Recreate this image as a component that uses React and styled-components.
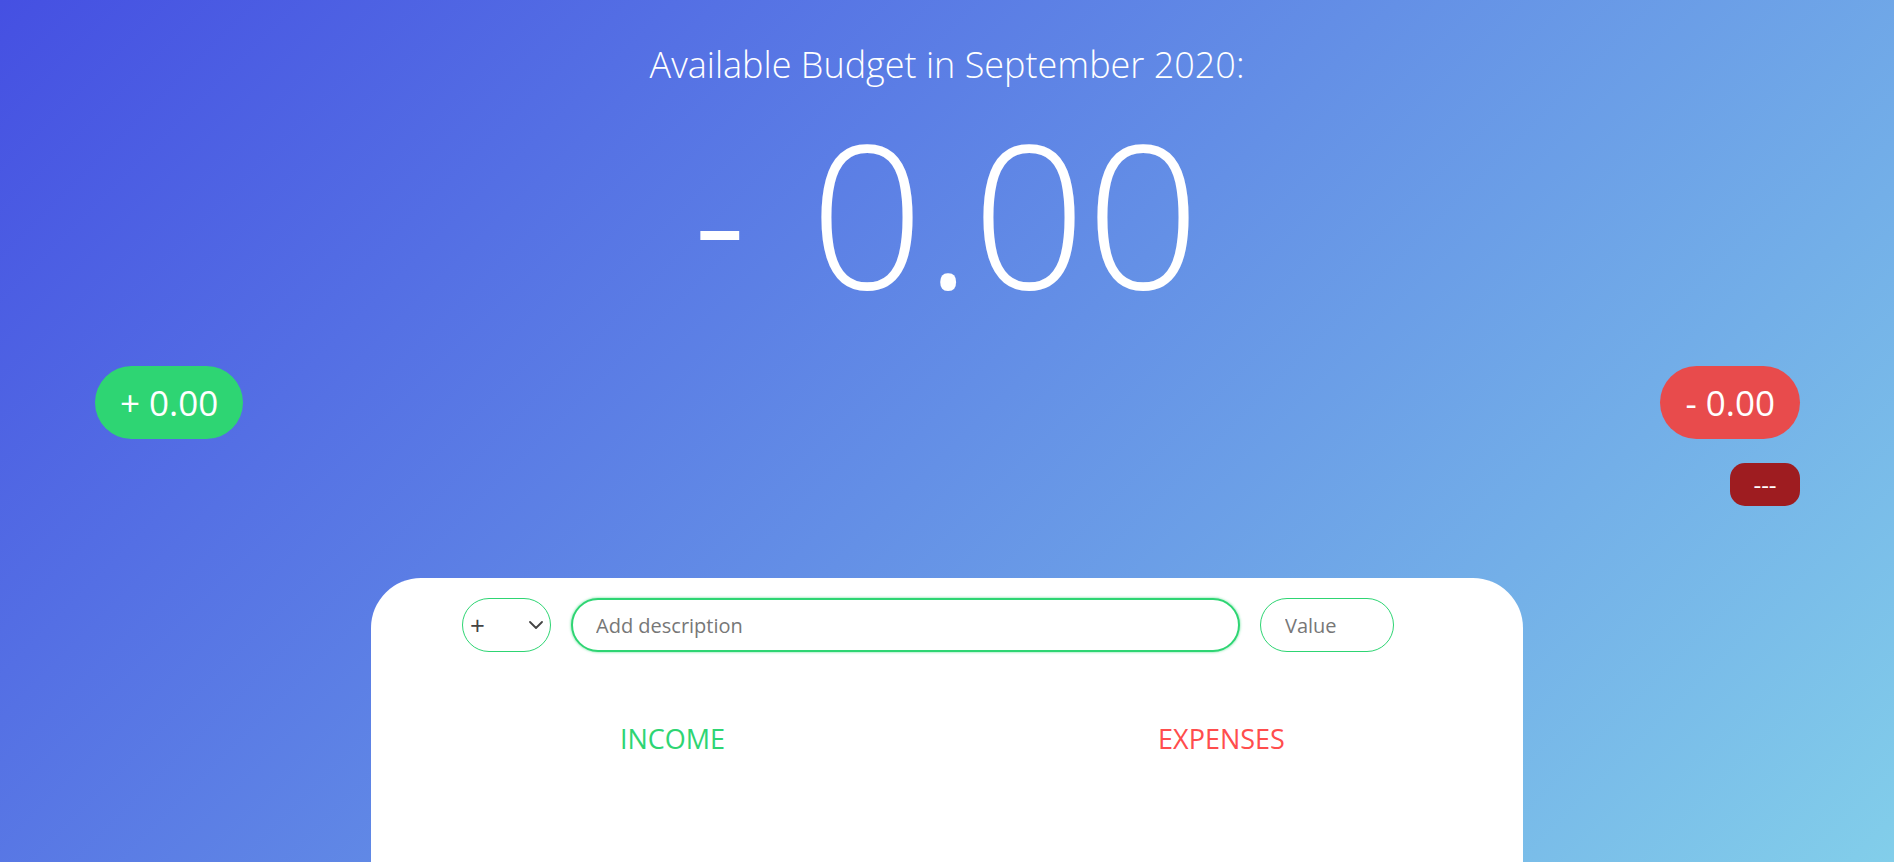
import React from "react";
import styled, { createGlobalStyle } from "styled-components";

const GlobalStyle = createGlobalStyle`
  html, body {
    margin: 0;
    padding: 0;
    overflow: hidden;
  }
  body {
    font-family: "Open Sans", "Noto Sans", sans-serif;
  }
  * { box-sizing: border-box; }
`;

const Page = styled.div`
  height: 100vh;
  display: flex;
  flex-direction: column;
  padding-top: 40px;
  overflow: hidden;
  background: linear-gradient(135deg, #4550e2 0%, #82ceea 100%);
  color: #fff;
`;

const Title = styled.h1`
  margin: 0;
  text-align: center;
  font-size: 36px;
  font-weight: 300;
  line-height: 49px;
`;

const Amount = styled.div`
  margin-top: 23px;
  text-align: center;
  font-size: 200px;
  font-weight: 300;
  line-height: 200px;
`;

const Sign = styled.span`
  display: inline-block;
  transform: scaleX(0.8);
  transform-origin: left center;
`;

const Summary = styled.div`
  margin-top: 54px;
  display: flex;
  justify-content: space-between;
  align-items: flex-start;
  padding: 0 94px 0 95px;
`;

const Column = styled.div`
  display: flex;
  flex-direction: column;
  align-items: flex-end;
  gap: 24px;
`;

const Pill = styled.div`
  height: 73px;
  padding: 0 25px;
  border-radius: 37px;
  display: flex;
  align-items: center;
  justify-content: center;
  background: ${(p) => p.$bg};
  font-size: 35px;
  font-weight: 400;
  color: #fff;
`;

const Badge = styled.div`
  height: 43px;
  width: 70px;
  border-radius: 15px;
  display: flex;
  align-items: center;
  justify-content: center;
  background: #9e1c20;
  font-size: 24px;
  color: #fff;
`;

const Card = styled.div`
  width: 1152px;
  margin: 72px auto 0;
  flex: 1;
  background: #fff;
  border-radius: 50px 50px 0 0;
  padding: 20px 27px 0;
`;

const Form = styled.div`
  display: flex;
  align-items: center;
  gap: 20px;
  padding-left: 64px;
`;

const SelectWrap = styled.div`
  position: relative;
  width: 89px;
  height: 54px;
  border: 1px solid #2ed573;
  border-radius: 27px;
  display: flex;
  align-items: center;
  flex-shrink: 0;
`;

const Select = styled.select`
  appearance: none;
  -webkit-appearance: none;
  width: 100%;
  height: 100%;
  border: none;
  outline: none;
  background: transparent;
  padding: 0 0 0 7px;
  font-family: "Open Sans", sans-serif;
  font-size: 26px;
  color: #444;
  border-radius: 27px;
`;

const Chevron = styled.svg`
  position: absolute;
  right: 7px;
  top: 50%;
  margin-top: -4px;
  pointer-events: none;
`;

const Input = styled.input`
  height: 54px;
  width: ${(p) => p.$w}px;
  flex-shrink: 0;
  border: ${(p) => (p.$focused ? "2px" : "1px")} solid #2ed573;
  border-radius: 27px;
  padding: 0 ${(p) => (p.$focused ? "23px" : "24px")};
  font-family: "Open Sans", sans-serif;
  font-size: 20px;
  color: #333;
  caret-color: #333;
  outline: none;
  box-shadow: ${(p) => (p.$focused ? "0 0 2px 1px rgba(46, 213, 115, 0.35)" : "none")};
  &::placeholder {
    color: #777;
  }
`;

const Lists = styled.div`
  margin-top: 68px;
  display: grid;
  grid-template-columns: 1fr 1fr;
`;

const ListHeading = styled.h2`
  margin: 0;
  text-align: center;
  font-size: 27px;
  font-weight: 400;
  line-height: normal;
  color: ${(p) => p.$color};
`;

export default function App() {
  return (
    <>
      <GlobalStyle />
      <Page>
        <Title>Available Budget in September 2020:</Title>
        <Amount>
          <Sign>-</Sign> 0.00
        </Amount>
        <Summary>
          <Pill $bg="#2ed573">+ 0.00</Pill>
          <Column>
            <Pill $bg="#e84b4c">- 0.00</Pill>
            <Badge>---</Badge>
          </Column>
        </Summary>
        <Card>
          <Form>
            <SelectWrap>
              <Select defaultValue="inc">
                <option value="inc">+</option>
                <option value="exp">-</option>
              </Select>
              <Chevron width="14" height="8" viewBox="0 0 14 8">
                <path d="M1 1 L7 7 L13 1" fill="none" stroke="#444" strokeWidth="1.8" strokeLinecap="round" strokeLinejoin="round" />
              </Chevron>
            </SelectWrap>
            <Input $w={669} $focused autoFocus type="text" placeholder="Add description" />
            <Input $w={134} type="number" placeholder="Value" />
          </Form>
          <Lists>
            <ListHeading $color="#2ed573">INCOME</ListHeading>
            <ListHeading $color="#ff4d4d">EXPENSES</ListHeading>
          </Lists>
        </Card>
      </Page>
    </>
  );
}
